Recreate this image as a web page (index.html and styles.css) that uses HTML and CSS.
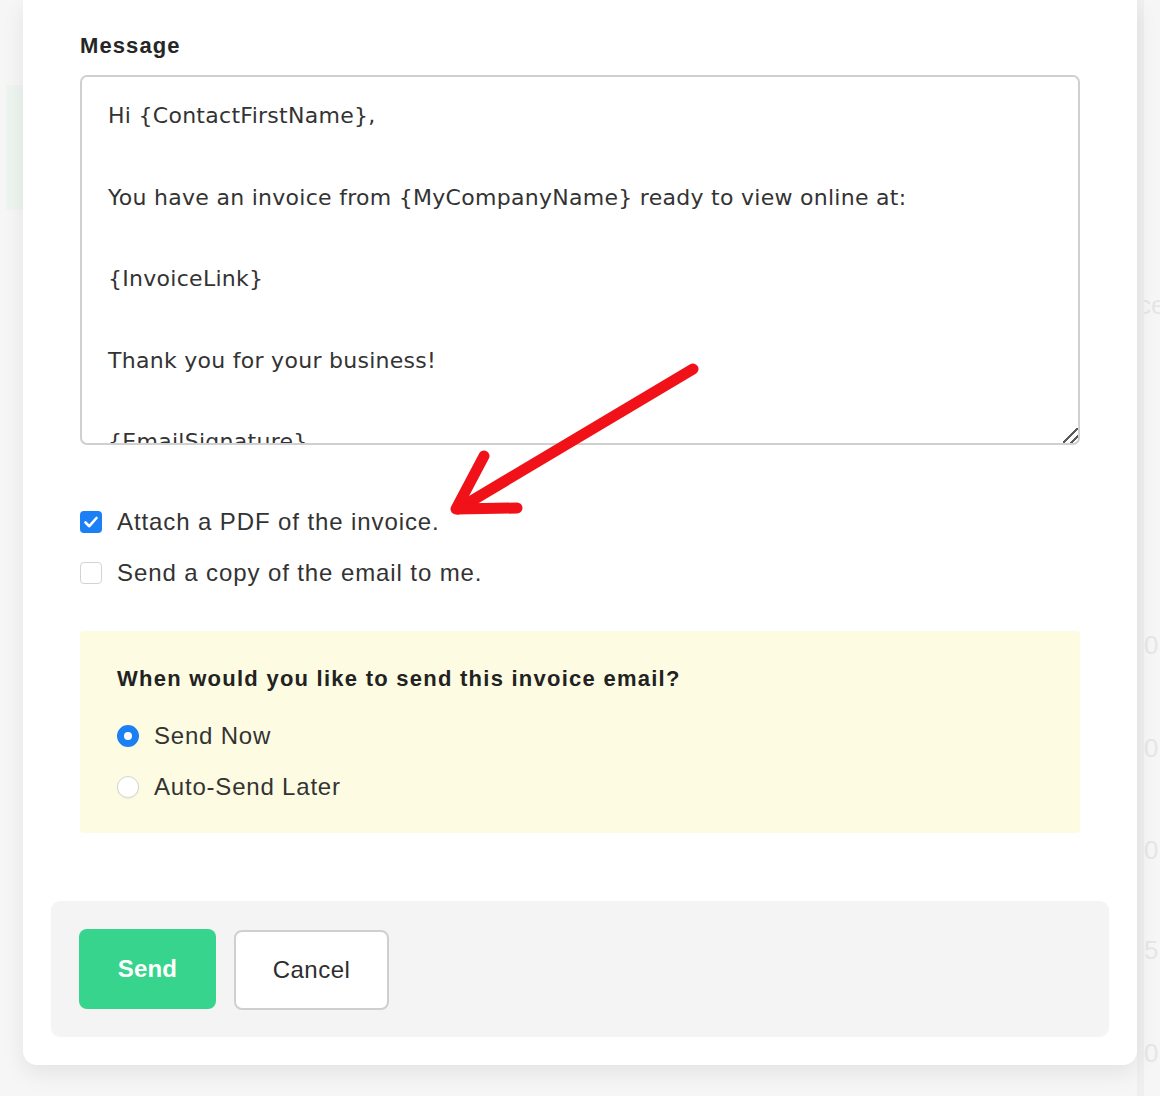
FILE: index.html
```html
<!DOCTYPE html>
<html lang="en">
<head>
<meta charset="utf-8">
<title>Send Invoice</title>
<link rel="stylesheet" href="styles.css">
</head>
<body>
<div class="backdrop">
  <div class="bg-left"></div>
  <div class="bg-right">
    <span class="bg-text bg-ce">ce</span>
    <span class="bg-text bg-n1">0</span>
    <span class="bg-text bg-n2">0</span>
    <span class="bg-text bg-n3">0</span>
    <span class="bg-text bg-n4">5</span>
    <span class="bg-text bg-n5">0</span>
  </div>
</div>

<div class="modal">
  <label class="field-label" for="msg">Message</label>
  <textarea id="msg" class="message">Hi {ContactFirstName},

You have an invoice from {MyCompanyName} ready to view online at:

{InvoiceLink}

Thank you for your business!

{EmailSignature}</textarea>

  <div class="options">
    <div class="check-row">
      <span class="box checked">
        <svg viewBox="0 0 22 22" width="22" height="22"><path d="M5.5 11.5 L9.3 15.2 L16.5 7" fill="none" stroke="#fff" stroke-width="2.6" stroke-linecap="round" stroke-linejoin="round"/></svg>
      </span>
      <span class="check-text">Attach a PDF of the invoice.</span>
    </div>
    <div class="check-row">
      <span class="box"></span>
      <span class="check-text">Send a copy of the email to me.</span>
    </div>
  </div>

  <div class="schedule">
    <div class="schedule-title">When would you like to send this invoice email?</div>
    <div class="radio-row">
      <span class="radio selected"></span>
      <span class="radio-text">Send Now</span>
    </div>
    <div class="radio-row">
      <span class="radio"></span>
      <span class="radio-text">Auto-Send Later</span>
    </div>
  </div>

  <div class="footer">
    <button class="btn btn-send">Send</button>
    <button class="btn btn-cancel">Cancel</button>
  </div>
</div>

<svg class="annotation" width="1160" height="1096" viewBox="0 0 1160 1096">
  <path d="M693 369 L458 509" fill="none" stroke="#f01218" stroke-width="11" stroke-linecap="round"/>
  <path d="M484 456 L456 509 L517 508" fill="none" stroke="#f01218" stroke-width="11" stroke-linecap="round" stroke-linejoin="round"/>
</svg>
</body>
</html>
```

FILE: styles.css
```css
* { box-sizing: border-box; }

html, body {
  margin: 0;
  padding: 0;
}

body {
  width: 1160px;
  height: 1096px;
  overflow: hidden;
  background: #f6f6f6;
  font-family: "Liberation Sans", Arial, sans-serif;
  color: #333;
  position: relative;
}

.backdrop {
  position: absolute;
  inset: 0;
  z-index: 0;
}

.bg-left {
  position: absolute;
  left: 6px;
  top: 85px;
  width: 17px;
  height: 125px;
  background: #eef4f0;
}

.bg-right {
  position: absolute;
  left: 1137px;
  top: 0;
  width: 23px;
  height: 1096px;
  border-left: 7px solid #efefef;
  overflow: hidden;
}

.bg-text {
  position: absolute;
  left: 0;
  font-size: 26px;
  color: #e6e6e6;
}
.bg-ce { top: 290px; left: -6px; }
.bg-n1 { top: 630px; }
.bg-n2 { top: 733px; }
.bg-n3 { top: 835px; }
.bg-n4 { top: 935px; }
.bg-n5 { top: 1038px; }

.modal {
  position: relative;
  z-index: 1;
  margin-left: 23px;
  width: 1114px;
  background: #fff;
  border-radius: 0 0 14px 14px;
  box-shadow: 0 8px 22px rgba(0, 0, 0, 0.08);
  padding: 33px 57px 28px 57px;
  display: flex;
  flex-direction: column;
}

.field-label {
  font-size: 22px;
  line-height: 26px;
  font-weight: bold;
  letter-spacing: 1.1px;
  color: #262626;
  margin-bottom: 16px;
}

.message {
  display: block;
  width: 1000px;
  height: 370px;
  border: 2px solid #d0d0d0;
  border-radius: 7px;
  padding: 19px 26px 0 26px;
  font-family: "DejaVu Sans", "Liberation Sans", sans-serif;
  font-size: 22px;
  line-height: 40.75px;
  letter-spacing: 0.28px;
  color: #333;
  background: #fff;
  resize: vertical;
  overflow: hidden;
  outline: none;
}

.message::-webkit-resizer {
  background:
    linear-gradient(135deg,
      transparent 0 46%,
      #5a5a5a 46% 56%,
      transparent 56% 70%,
      #5a5a5a 70% 80%,
      transparent 80%);
}

.options {
  margin-top: 59px;
  display: flex;
  flex-direction: column;
  gap: 15px;
}

.check-row,
.radio-row {
  display: flex;
  align-items: center;
  height: 36px;
}

.box {
  width: 22px;
  height: 22px;
  border-radius: 4px;
  border: 1.5px solid #d3d3d3;
  background: #fff;
  flex: none;
  display: flex;
  align-items: center;
  justify-content: center;
}

.box.checked {
  border: none;
  background: #1b7ff5;
}

.check-text {
  margin-left: 15px;
  font-size: 24px;
  letter-spacing: 0.9px;
  color: #333;
}

.schedule {
  margin-top: 40px;
  background: #fdfce2;
  border-radius: 4px;
  padding: 34px 37px 28px 37px;
  display: flex;
  flex-direction: column;
}

.schedule-title {
  font-size: 22px;
  line-height: 28px;
  font-weight: bold;
  letter-spacing: 1.25px;
  color: #222;
  margin-bottom: 25px;
}

.radio-row + .radio-row {
  margin-top: 15px;
}

.radio {
  width: 22px;
  height: 22px;
  border-radius: 50%;
  background: #fff;
  border: 1.5px solid #d6d6d6;
  box-shadow: 0 1px 2px rgba(0, 0, 0, 0.06);
  flex: none;
}

.radio.selected {
  border: 7px solid #1b7ff5;
  box-shadow: none;
}

.radio-text {
  margin-left: 15px;
  font-size: 24px;
  letter-spacing: 0.8px;
  color: #333;
}

.footer {
  margin: 68px -29px 0 -29px;
  background: #f4f4f4;
  border-radius: 9px;
  height: 136px;
  padding: 28px;
  display: flex;
  align-items: flex-start;
  gap: 18px;
}

.btn {
  font-family: "Liberation Sans", Arial, sans-serif;
  font-size: 24px;
  height: 80px;
  border-radius: 8px;
  cursor: pointer;
}

.btn-send {
  width: 137px;
  background: #36d48c;
  border: none;
  color: #fff;
  font-weight: bold;
  letter-spacing: 0.2px;
}

.btn-cancel {
  width: 155px;
  margin-top: 1px;
  background: #fff;
  border: 2px solid #cfcfcf;
  color: #2e2e2e;
  letter-spacing: 0.5px;
}

.annotation {
  position: absolute;
  left: 0;
  top: 0;
  z-index: 2;
  pointer-events: none;
}
```
